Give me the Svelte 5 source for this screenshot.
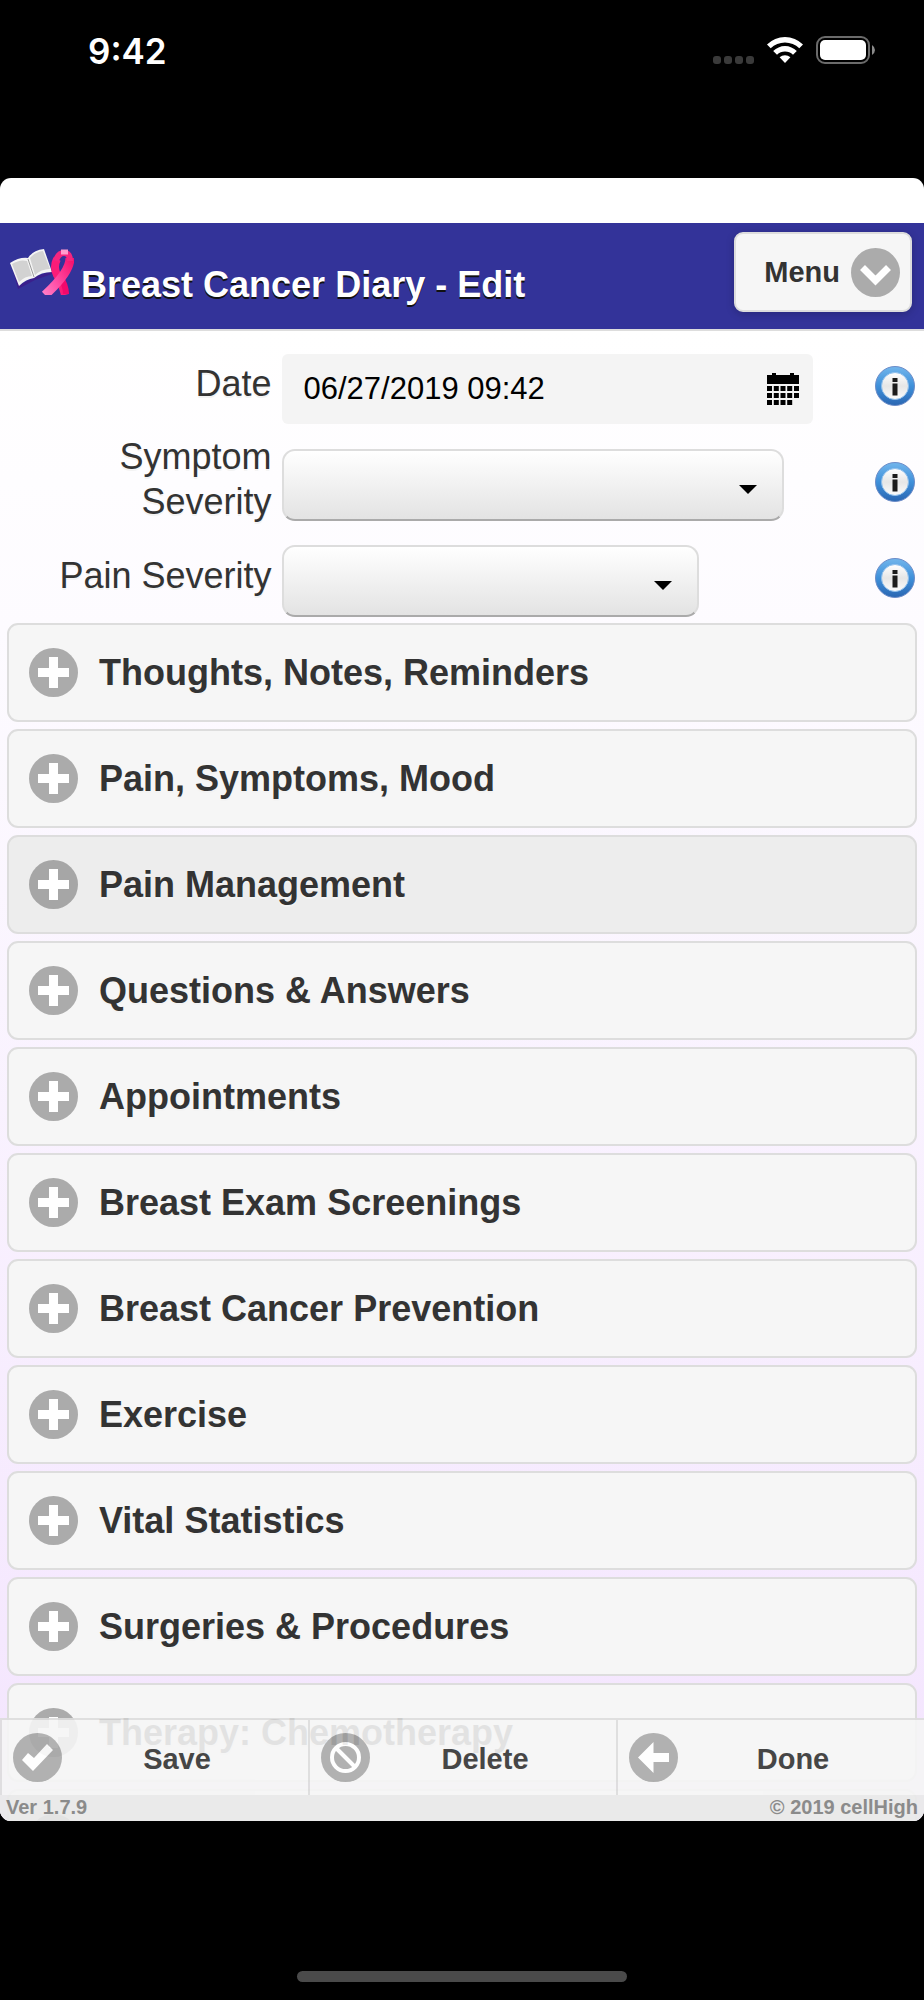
<script lang="ts">
	type Section = { title: string; pressed?: boolean }

	const sections: Section[] = [
		{ title: 'Thoughts, Notes, Reminders' },
		{ title: 'Pain, Symptoms, Mood' },
		{ title: 'Pain Management', pressed: true },
		{ title: 'Questions & Answers' },
		{ title: 'Appointments' },
		{ title: 'Breast Exam Screenings' },
		{ title: 'Breast Cancer Prevention' },
		{ title: 'Exercise' },
		{ title: 'Vital Statistics' },
		{ title: 'Surgeries & Procedures' },
		{ title: 'Therapy: Chemotherapy' },
		{ title: '' }
	]

	let date = $state('06/27/2019 09:42')
	let symptom = $state('')
	let pain = $state('')
</script>

{#snippet info()}
	<button class="info" type="button">
		<svg viewBox="0 0 40 42" width="40" height="42">
			<defs>
				<linearGradient id="ring" x1="0" y1="0" x2="0" y2="1">
					<stop offset="0" stop-color="#72b6ec" />
					<stop offset="0.5" stop-color="#3f90da" />
					<stop offset="1" stop-color="#2a66b2" />
				</linearGradient>
				<linearGradient id="face" x1="0" y1="0" x2="0" y2="1">
					<stop offset="0" stop-color="#fff" />
					<stop offset="0.5" stop-color="#e6e6e6" />
					<stop offset="1" stop-color="#fbfbfb" />
				</linearGradient>
			</defs>
			<circle cx="20" cy="21" r="19.5" fill="url(#ring)" stroke="#6c8cc8" />
			<circle cx="20" cy="21" r="13.5" fill="url(#face)" stroke="#8fbfec" stroke-width="1" />
			<path d="M17.500 13h5v4h-5zM17.500 18.500h5v12h-5z" fill="#1b1b1b" />
		</svg>
	</button>
{/snippet}

{#snippet caret()}
	<svg class="caret" viewBox="0 0 18 18" width="18" height="18"><path d="M0 9h18l-9 9z" /></svg>
{/snippet}

<div class="phone">
	<div class="status">
		<span class="time">9:42</span>
		<div class="signals">
			<svg viewBox="0 0 42 30" width="42" height="30" fill="#3a3a3a">
				<rect x="1" y="21" width="8" height="8" rx="3" />
				<rect x="12" y="21" width="8" height="8" rx="3" />
				<rect x="23" y="21" width="8" height="8" rx="3" />
				<rect x="34" y="21" width="8" height="8" rx="3" />
			</svg>
			<svg viewBox="0 0 38 30" width="38" height="30" fill="#fff">
				<path d="M1 9.500A25.500 25.500 0 0 1 37 9.500L33.300 13.300A20.300 20.300 0 0 0 4.700 13.300z" />
				<path d="M7.200 16A16.700 16.700 0 0 1 30.800 16L27 19.800A11.500 11.500 0 0 0 11 19.800z" />
				<path d="M13.600 22.300A7.800 7.800 0 0 1 24.400 22.300L19 28z" />
			</svg>
			<svg viewBox="0 0 60 30" width="60" height="30">
				<rect x="1" y="2" width="52" height="26" rx="8" fill="none" stroke="#6b6b6b" stroke-width="2" />
				<rect x="4" y="5" width="46" height="20" rx="5" fill="#fff" />
				<path d="M56 10q3 2 3 5t-3 5z" fill="#8a8a8a" />
			</svg>
		</div>
	</div>

	<div class="sheet">
		<header>
			<svg class="logo" viewBox="0 0 64 46" width="64" height="46">
				<defs>
					<linearGradient id="strand" x1="1" y1="0" x2="0" y2="1">
						<stop offset="0" stop-color="#f5126f" />
						<stop offset="0.6" stop-color="#ff4fa6" />
						<stop offset="1" stop-color="#ff7cc6" />
					</linearGradient>
				</defs>
				<path d="M2 18L8 40l17-9 17-6v-3l-18 6-14 8z" fill="#3b1f8c" />
				<path d="M0 14q9-6 18-5Q23 1 34 0l8 23q-11 0-18 6-8 1-15 8z" fill="#f4f4f4" />
				<path d="M2 15q8-5 15-3l5 15q-7 0-13 6zM20 9q5-6 13-7l7 18q-9 0-15 6z" fill="#d2d2d2" />
				<path d="M18 10l6 18" stroke="#9c9c9c" stroke-width="1" fill="none" />
				<g fill="none" stroke-width="8">
					<path d="M55 46Q52 34 47 26 43 18 47 10" stroke="#fb1c78" />
					<path d="M56 45Q56 36 49 26" stroke="#f2086c" stroke-width="6" />
					<path d="M35 46Q48 34 54 25 60 16 60 9" stroke="url(#strand)" stroke-width="9" />
					<path d="M46 12Q48 4 54 4T60 12" stroke="#f5257f" stroke-width="6" />
					<path d="M51 3h7" stroke="#ff9ccd" stroke-width="5" />
				</g>
			</svg>
			<h1>Breast Cancer Diary - Edit</h1>
			<button class="menu" type="button">
				Menu
				<svg viewBox="0 0 49 49" width="49" height="49">
					<circle cx="24.500" cy="24.500" r="24.500" fill="#ababab" />
					<path d="M11.500 19.500l13 13 13-13" fill="none" stroke="#fff" stroke-width="7" />
				</svg>
			</button>
		</header>

		<div class="content">
			<form>
				<label for="date">Date</label>
				<div class="date-field">
					<input id="date" type="text" bind:value={date} />
					<svg viewBox="0 0 32 32" width="32" height="32">
						<path d="M0 2h5V0h4v2h14V0h4v2h5v9H0z" />
						{#each [13, 20, 27] as y}
							{#each [0, 6.8, 13.5, 20.2, 27] as x}
								{#if !(y === 27 && x === 27)}<rect {x} {y} width="5" height="5" />{/if}
							{/each}
						{/each}
					</svg>
				</div>
				{@render info()}

				<label for="symptom">Symptom Severity</label>
				<div class="select wide">
					<select id="symptom" bind:value={symptom}><option value=""></option></select>
					{@render caret()}
				</div>
				{@render info()}

				<label for="pain">Pain Severity</label>
				<div class="select">
					<select id="pain" bind:value={pain}><option value=""></option></select>
					{@render caret()}
				</div>
				{@render info()}
			</form>

			<div class="sections">
				{#each sections as s}
					<button class="section" class:pressed={s.pressed} type="button">
						<svg viewBox="0 0 49 49" width="49" height="49">
							<circle cx="24.500" cy="24.500" r="24.500" />
							<path d="M20 9h9v11h11v9H29v11h-9V29H9v-9h11z" fill="#fff" />
						</svg>
						{s.title}
					</button>
				{/each}
			</div>
		</div>

		<footer>
			<div class="actions">
				<button type="button">
					<svg viewBox="0 0 49 49" width="49" height="49">
						<circle cx="24.500" cy="24.500" r="24.500" fill="#aaa" />
						<path d="M9 27l6-7 6 5L34 11l6 6-20 21z" fill="#fff" />
					</svg>
					<span>Save</span>
				</button>
				<button type="button">
					<svg viewBox="0 0 49 49" width="49" height="49">
						<circle cx="24.500" cy="24.500" r="24.500" fill="#aaa" />
						<circle cx="24.500" cy="24.500" r="13.500" fill="none" stroke="#fff" stroke-width="4" />
						<path d="M15 15l19 19" stroke="#fff" stroke-width="4" />
					</svg>
					<span>Delete</span>
				</button>
				<button type="button">
					<svg viewBox="0 0 49 49" width="49" height="49">
						<circle cx="24.500" cy="24.500" r="24.500" fill="#aaa" />
						<path d="M9 24.500L24.500 9v11H40v9H24.500v11z" fill="#fff" />
					</svg>
					<span>Done</span>
				</button>
			</div>
			<div class="about">
				<span>Ver 1.7.9</span>
				<span>© 2019 cellHigh</span>
			</div>
		</footer>
	</div>

	<div class="home"><div class="indicator"></div></div>
</div>

<style>
	:global(body) { margin: 0; background: #000; }

	.phone {
		height: 100vh; display: flex; flex-direction: column;
		background: #000; color: #333; font-family: "Liberation Sans", Arial, sans-serif;
	}
	svg { display: block; flex: none; }
	button { font-family: inherit; color: inherit; margin: 0; cursor: pointer; }

	.status {
		flex: none; height: 178px; box-sizing: border-box; padding: 30px 48px 0 88px;
		display: flex; justify-content: space-between; align-items: flex-start;
	}
	.time { color: #fff; font: 600 35px/42px Inter, sans-serif; }
	.signals { display: flex; gap: 12px; padding-top: 5px; }

	.sheet {
		flex: 1; min-height: 0; position: relative; overflow: hidden;
		display: flex; flex-direction: column; padding-top: 45px; box-sizing: border-box;
		background: #fff; border-radius: 11px;
	}

	header {
		flex: none; height: 108px; box-sizing: border-box; padding: 0 12px 0 10px;
		display: flex; align-items: center; gap: 7px;
		background: #333399; border-bottom: 2px solid #ddd;
	}
	.logo { margin-bottom: 8px; }
	h1 {
		flex: 1; margin: 0; padding-top: 16px; font-size: 36px; line-height: 45px; white-space: nowrap;
		color: #fff; text-shadow: 0 2px 0 #111;
	}
	.menu {
		height: 80px; display: flex; align-items: center; gap: 11px; padding: 0 10px 0 28px; margin-bottom: 8px;
		background: #f6f6f6; border: 2px solid #ddd; border-radius: 9px;
		font-size: 29px; font-weight: 700; box-shadow: 0 2px 8px rgba(0, 0, 0, 0.2);
	}

	.content {
		flex: 1; min-height: 0; overflow-y: auto; scrollbar-width: none;
		background: linear-gradient(#fff, #fdfbff 20%, #f4e6fe 95%);
	}

	form {
		display: grid; grid-template-columns: 30% 1fr 40px; grid-auto-rows: 72px;
		gap: 24px 7px; align-items: center; padding: 22px 9px 0 0;
	}
	label {
		padding: 0 3px 12px 20px; text-align: right; font-size: 36px; line-height: 45px;
		text-shadow: 0 2px 0 #f3f3f3;
	}
	.date-field {
		width: 531px; max-width: 100%; height: 70px; box-sizing: border-box; padding: 0 14px 0 22px;
		display: flex; align-items: center; background: #f4f4f4; border-radius: 6px;
	}
	.date-field input {
		flex: 1; min-width: 0; padding: 0; border: none; outline: none; background: none;
		font-family: inherit; font-size: 31px; color: #000;
	}
	.select { display: grid; align-items: center; width: 417px; max-width: 100%; }
	.select.wide { width: 502px; }
	select, .caret { grid-area: 1 / 1; }
	select {
		appearance: none; width: 100%; height: 72px; border-radius: 13px;
		border: 2px solid #ddd; border-bottom-color: #aaa;
		background: linear-gradient(#fff, #e3e3e3); font-size: 31px;
	}
	.caret { justify-self: end; margin-right: 27px; pointer-events: none; }
	.info { padding: 0 0 6px; border: none; background: none; }

	.sections { display: flex; flex-direction: column; gap: 7px; padding: 6px 7px 106px; }
	.section {
		flex: none; height: 99px; display: flex; align-items: center; gap: 21px; padding: 0 20px;
		background: #f6f6f6; border: 2px solid #ddd; border-radius: 11px;
		font-size: 36px; font-weight: 700; text-align: left; text-shadow: 0 2px 0 #f3f3f3;
	}
	.section circle { fill: #ababab; }
	.section.pressed { background: #ededed; }
	.section.pressed circle { fill: #a6a6a6; }

	/* stays over the scrolling list */
	footer { position: absolute; inset: auto 0 0; opacity: 0.9; background: #e9e9e9; }
	.actions { display: grid; grid-template-columns: repeat(3, 1fr); }
	.actions button {
		height: 77px; display: flex; align-items: center; padding: 0 0 0 11px;
		background: #f6f6f6; border: solid #ddd; border-width: 2px 0 0 2px;
		font-size: 29px; font-weight: 700;
	}
	.actions span { flex: 1; padding-right: 16px; padding-top: 4px; text-align: center; }
	.about {
		display: flex; justify-content: space-between; padding: 0 6px 2px;
		font-size: 20px; line-height: 24px; font-weight: 700; color: #808080;
	}

	.home { flex: none; height: 179px; display: flex; flex-direction: column; justify-content: flex-end; align-items: center; }
	.indicator { width: 330px; height: 11px; margin-bottom: 18px; border-radius: 6px; background: #4a4a4a; }
</style>
